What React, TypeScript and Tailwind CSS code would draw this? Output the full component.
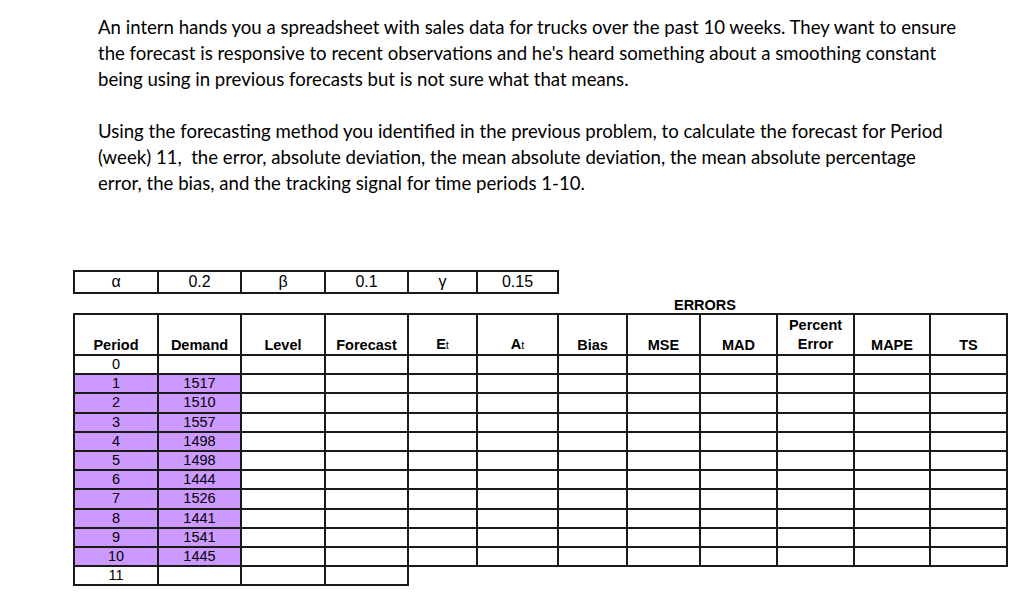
const widths = [84, 83, 84, 83, 69, 81, 69, 73, 77, 77, 76, 77];

const demand = [1517, 1510, 1557, 1498, 1498, 1444, 1526, 1441, 1541, 1445];

const cell = "border-2 border-[#1a1a1a] p-0 text-center";

const Header = () => (
  <tr className="h-[41px] font-bold align-bottom text-[14.5px] leading-[18px]">
    <td className={cell}>Period</td>
    <td className={cell}>Demand</td>
    <td className={cell}>Level</td>
    <td className={cell}>Forecast</td>
    <td className={cell}>
      E<span className="text-[11px] font-normal">t</span>
    </td>
    <td className={cell}>
      A<span className="text-[11px] font-normal">t</span>
    </td>
    <td className={cell}>Bias</td>
    <td className={cell}>MSE</td>
    <td className={cell}>MAD</td>
    <td className={cell + " leading-[19px]"}>
      Percent
      <br />
      Error
    </td>
    <td className={cell}>MAPE</td>
    <td className={cell}>TS</td>
  </tr>
);

export default function App() {
  return (
    <div className="w-[1024px] h-[595px] bg-white overflow-hidden text-black">
      <div className="pl-[98px] pt-[14px] font-['Lato',sans-serif] text-[18.6px] leading-[26px] whitespace-nowrap">
        <p>
          An intern hands you a spreadsheet with sales data for trucks over the past 10 weeks. They want to ensure
        </p>
        <p>
          the forecast is responsive to recent observations and he's heard something about a smoothing constant
        </p>
        <p>being using in previous forecasts but is not sure what that means.</p>
        <p className="mt-[26px]">
          Using the forecasting method you identified in the previous problem, to calculate the forecast for Period
        </p>
        <p>(week) 11,&nbsp; the error, absolute deviation, the mean absolute deviation, the mean absolute percentage</p>
        <p>error, the bias, and the tracking signal for time periods 1-10.</p>
      </div>

      <div className="pl-[73px] mt-[74px] font-['Liberation_Sans',Arial,sans-serif] text-[14.5px]">
        <table className="border-collapse table-fixed">
          <colgroup>
            {widths.slice(0, 6).map((w, i) => (
              <col key={i} style={{ width: w }} />
            ))}
          </colgroup>
          <tbody>
            <tr className="h-[22px] text-[16px] leading-[18px]">
              <td className={cell}>α</td>
              <td className={cell}>0.2</td>
              <td className={cell}>β</td>
              <td className={cell}>0.1</td>
              <td className={cell}>γ</td>
              <td className={cell}>0.15</td>
            </tr>
          </tbody>
        </table>

        <div className="w-[933px] flex h-[19px] items-end">
          <div className="w-[484px]" />
          <div className="w-[296px] text-center font-bold text-[14.5px] leading-[16px]">ERRORS</div>
        </div>

        <table className="border-collapse table-fixed">
          <colgroup>
            {widths.map((w, i) => (
              <col key={i} style={{ width: w }} />
            ))}
          </colgroup>
          <tbody>
            <Header />
            <tr className="h-[19.2px] leading-[15px]">
              <td className={cell}>0</td>
              {widths.slice(1).map((_, i) => (
                <td key={i} className={cell} />
              ))}
            </tr>
            {demand.map((d, r) => (
              <tr key={r} className="h-[19.2px] leading-[15px]">
                <td className={cell + " bg-[#cc99ff]"}>{r + 1}</td>
                <td className={cell + " bg-[#cc99ff]"}>{d}</td>
                {widths.slice(2).map((_, i) => (
                  <td key={i} className={cell} />
                ))}
              </tr>
            ))}
            <tr className="h-[19.2px] leading-[15px]">
              <td className={cell}>11</td>
              <td className={cell} />
              <td className={cell} />
              <td className={cell} />
              <td colSpan={8} className="p-0" />
            </tr>
          </tbody>
        </table>
      </div>
    </div>
  );
}
